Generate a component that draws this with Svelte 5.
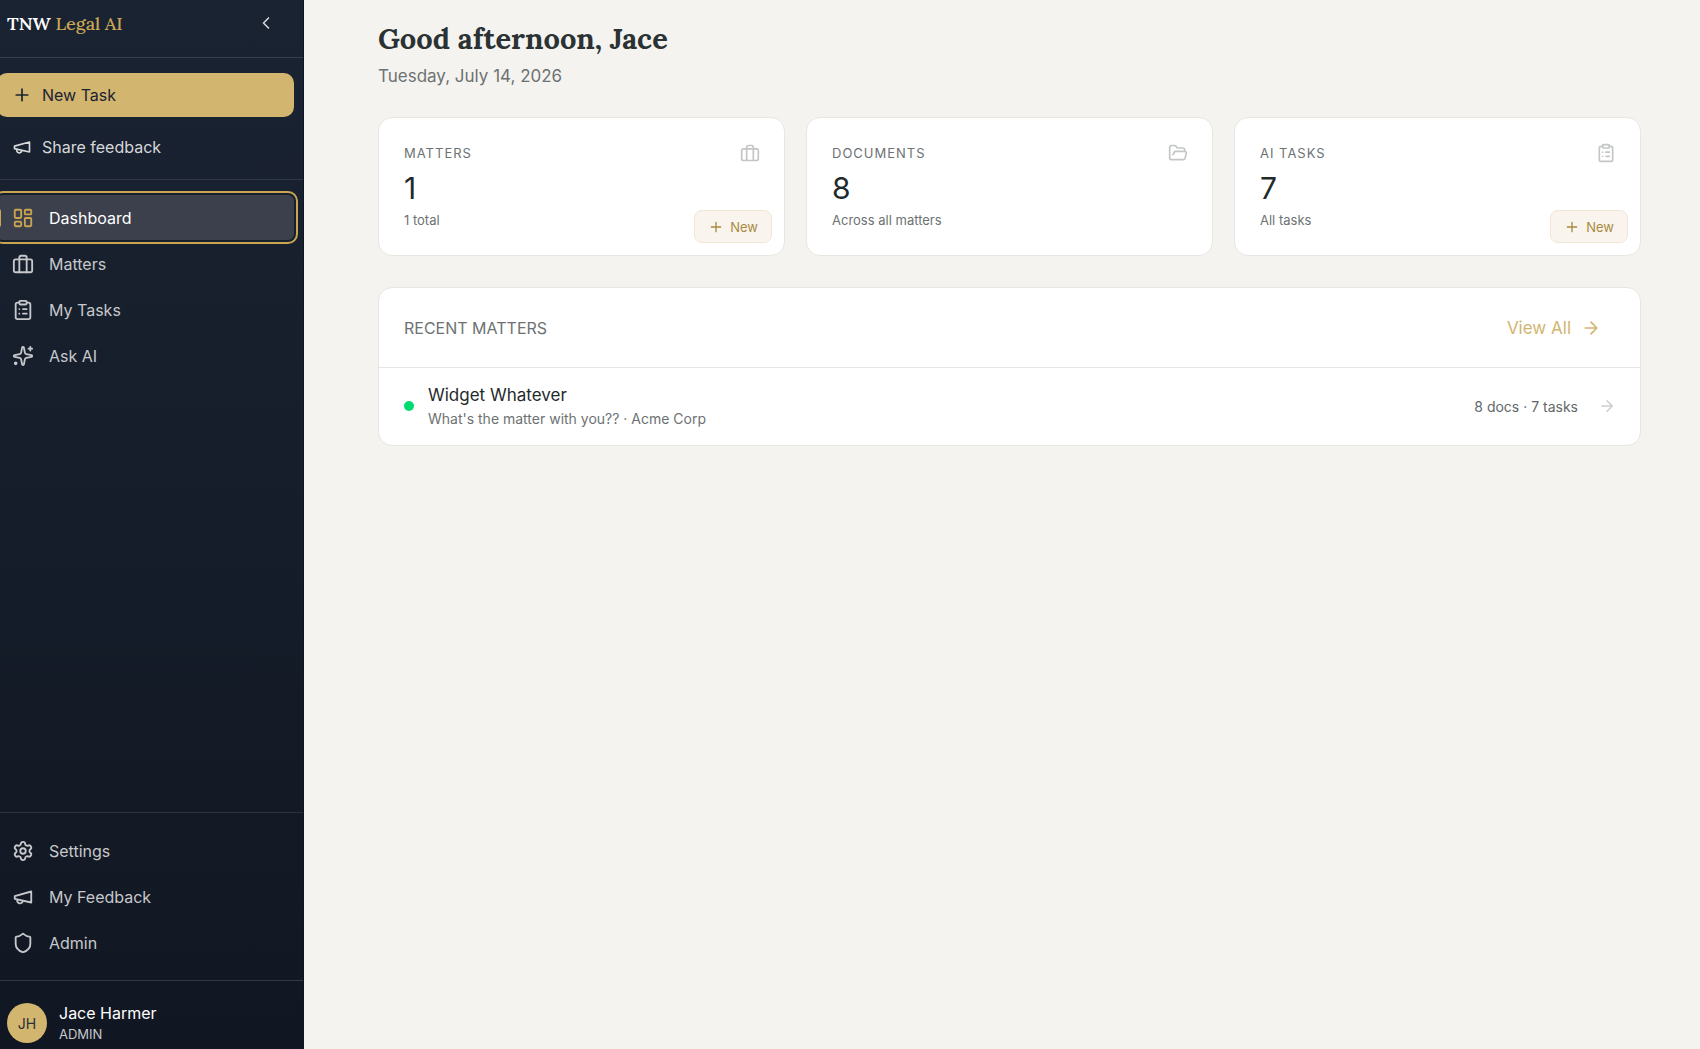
<script>
  const mainNav = [
    { label: 'Dashboard', icon: 'dashboard', active: true },
    { label: 'Matters', icon: 'briefcase' },
    { label: 'My Tasks', icon: 'clipboard' },
    { label: 'Ask AI', icon: 'sparkles' }
  ];

  const footerNav = [
    { label: 'Settings', icon: 'settings' },
    { label: 'My Feedback', icon: 'megaphone' },
    { label: 'Admin', icon: 'shield' }
  ];

  const stats = [
    { label: 'Matters', value: 1, note: '1 total', icon: 'briefcase', canAdd: true },
    { label: 'Documents', value: 8, note: 'Across all matters', icon: 'folder' },
    { label: 'AI Tasks', value: 7, note: 'All tasks', icon: 'clipboard', canAdd: true }
  ];

  const matters = [
    { name: 'Widget Whatever', description: "What's the matter with you??", client: 'Acme Corp', docs: 8, tasks: 7 }
  ];
</script>

{#snippet icon(name, size = 20, stroke = 2)}
  <svg
    width={size}
    height={size}
    viewBox="0 0 24 24"
    fill="none"
    stroke="currentColor"
    stroke-width={stroke}
    stroke-linecap="round"
    stroke-linejoin="round"
    aria-hidden="true"
  >
    {#if name === 'plus'}
      <path d="M5 12h14M12 5v14" />
    {:else if name === 'chevron'}
      <path d="m15 18-6-6 6-6" />
    {:else if name === 'arrow'}
      <path d="M5 12h14M12 5l7 7-7 7" />
    {:else if name === 'dashboard'}
      <rect width="7" height="9" x="3" y="3" rx="1" />
      <rect width="7" height="5" x="14" y="3" rx="1" />
      <rect width="7" height="9" x="14" y="12" rx="1" />
      <rect width="7" height="5" x="3" y="16" rx="1" />
    {:else if name === 'briefcase'}
      <rect width="20" height="14" x="2" y="7" rx="2" />
      <path d="M16 21V5a2 2 0 0 0-2-2h-4a2 2 0 0 0-2 2v16" />
    {:else if name === 'clipboard'}
      <rect width="8" height="4" x="8" y="2" rx="1" />
      <path d="M16 4h2a2 2 0 0 1 2 2v14a2 2 0 0 1-2 2H6a2 2 0 0 1-2-2V6a2 2 0 0 1 2-2h2" />
      <path d="M12 11h4M12 16h4M8 11h.01M8 16h.01" />
    {:else if name === 'sparkles'}
      <path d="M11.017 2.814a1 1 0 0 1 1.966 0l1.051 5.558a2 2 0 0 0 1.594 1.594l5.558 1.051a1 1 0 0 1 0 1.966l-5.558 1.051a2 2 0 0 0-1.594 1.594l-1.051 5.558a1 1 0 0 1-1.966 0l-1.051-5.558a2 2 0 0 0-1.594-1.594l-5.558-1.051a1 1 0 0 1 0-1.966l5.558-1.051a2 2 0 0 0 1.594-1.594z" />
      <path d="M20 2v4M22 4h-4" />
      <circle cx="4" cy="20" r="1" />
    {:else if name === 'settings'}
      <path d="M9.671 4.136a2.34 2.34 0 0 1 4.659 0 2.34 2.34 0 0 0 3.319 1.915 2.34 2.34 0 0 1 2.33 4.033 2.34 2.34 0 0 0 0 3.831 2.34 2.34 0 0 1-2.33 4.033 2.34 2.34 0 0 0-3.319 1.915 2.34 2.34 0 0 1-4.659 0 2.34 2.34 0 0 0-3.32-1.915 2.34 2.34 0 0 1-2.33-4.033 2.34 2.34 0 0 0 0-3.831A2.34 2.34 0 0 1 6.35 6.051a2.34 2.34 0 0 0 3.319-1.915" />
      <circle cx="12" cy="12" r="3" />
    {:else if name === 'megaphone'}
      <path d="m3 11 18-5v12L3 14v-3z" />
      <path d="M11.6 16.8a3 3 0 1 1-5.8-1.6" />
    {:else if name === 'shield'}
      <path d="M20 13c0 5-3.5 7.5-7.66 8.95a1 1 0 0 1-.67-.01C7.5 20.5 4 18 4 13V6a1 1 0 0 1 1-1c2 0 4.5-1.2 6.24-2.72a1.17 1.17 0 0 1 1.52 0C14.51 3.81 17 5 19 5a1 1 0 0 1 1 1z" />
    {:else if name === 'folder'}
      <path d="m6 14 1.5-2.9A2 2 0 0 1 9.24 10H20a2 2 0 0 1 1.94 2.5l-1.54 6a2 2 0 0 1-1.95 1.5H4a2 2 0 0 1-2-2V5a2 2 0 0 1 2-2h3.9a2 2 0 0 1 1.69.9l.81 1.2a2 2 0 0 0 1.67.9H18a2 2 0 0 1 2 2v2" />
    {/if}
  </svg>
{/snippet}

<div class="app">
  <aside class="sidebar">
    <div class="brand">
      <span class="brand-name">TNW <span>Legal AI</span></span>
      <button class="collapse" aria-label="Collapse sidebar">{@render icon('chevron')}</button>
    </div>

    <div class="quick-actions">
      <button class="new-task">{@render icon('plus')} New Task</button>
      <button class="share">{@render icon('megaphone')} Share feedback</button>
    </div>

    <nav class="nav" aria-label="Main">
      {#each mainNav as item}
        <a href="#{item.icon}" class="nav-item" class:active={item.active}>
          {@render icon(item.icon, 22)}
          {item.label}
        </a>
      {/each}
    </nav>

    <nav class="nav nav-footer" aria-label="Account">
      {#each footerNav as item}
        <a href="#{item.icon}" class="nav-item">
          {@render icon(item.icon, 22)}
          {item.label}
        </a>
      {/each}
    </nav>

    <div class="user">
      <div class="avatar">JH</div>
      <div class="user-info">
        <div class="user-name">Jace Harmer</div>
        <div class="user-role">ADMIN</div>
      </div>
    </div>
  </aside>

  <main class="main">
    <h1>Good afternoon, Jace</h1>
    <p class="date">Tuesday, July 14, 2026</p>

    <div class="stats">
      {#each stats as stat}
        <section class="card stat">
          <div class="stat-head">
            <h2>{stat.label}</h2>
            {@render icon(stat.icon)}
          </div>
          <div class="stat-value">{stat.value}</div>
          <div class="stat-note">{stat.note}</div>
          {#if stat.canAdd}
            <button class="add">{@render icon('plus', 16)} New</button>
          {/if}
        </section>
      {/each}
    </div>

    <section class="card recent">
      <div class="recent-head">
        <h2>Recent Matters</h2>
        <a href="#matters" class="view-all">View All {@render icon('arrow')}</a>
      </div>
      {#each matters as matter}
        <a href="#matter" class="matter">
          <span class="dot"></span>
          <span class="matter-info">
            <span class="matter-name">{matter.name}</span>
            <span class="matter-description">{matter.description} · {matter.client}</span>
          </span>
          <span class="matter-counts">{matter.docs} docs · {matter.tasks} tasks</span>
          {@render icon('arrow', 18)}
        </a>
      {/each}
    </section>
  </main>
</div>

<style>
  :global(body) {
    margin: 0;
    background: #f5f3ef;
  }

  .app {
    display: flex;
    min-height: 100vh;
    font-family: Inter, 'Liberation Sans', sans-serif;
    font-size: 16px;
    color: #2a3234;
  }

  .app :global(svg) {
    flex: none;
  }

  a {
    color: inherit;
    text-decoration: none;
  }

  button {
    font: inherit;
    cursor: pointer;
  }

  h1,
  h2,
  p {
    margin: 0;
    font-weight: 400;
  }

  .sidebar {
    display: flex;
    flex-direction: column;
    box-sizing: border-box;
    flex: none;
    width: 304px;
    overflow: hidden;
    background: linear-gradient(180deg, #1a2332 0%, #111722 100%);
    border-right: 1px solid #0e1523;
    color: #c6c8cb;
  }

  .brand {
    display: flex;
    align-items: center;
    justify-content: space-between;
    height: 46px;
    padding: 0 27px 11px 7px;
    border-bottom: 1px solid #363e4b;
  }

  .brand-name {
    font-family: Lora, 'Liberation Serif', serif;
    font-size: 18px;
    font-weight: 600;
    color: #fff;
  }

  .brand-name span {
    font-weight: 500;
    color: #c9a755;
  }

  .collapse {
    display: flex;
    padding: 0;
    border: none;
    background: none;
    color: #d3d5d8;
  }

  .quick-actions {
    display: flex;
    flex-direction: column;
    gap: 8px;
    padding: 15px 9px 10px 0;
    border-bottom: 1px solid #313946;
  }

  .new-task,
  .share {
    display: flex;
    align-items: center;
    gap: 10px;
    height: 44px;
    margin-left: -3px;
    padding: 0 15px;
    border: none;
    border-radius: 10px;
    background: none;
    color: #d6d8da;
  }

  .new-task {
    background: #d2b56e;
    color: #1a2332;
  }

  .nav {
    display: flex;
    flex-direction: column;
    gap: 1px;
    padding: 15px 9px 15px 0;
  }

  .nav-item {
    position: relative;
    display: flex;
    align-items: center;
    gap: 15px;
    height: 45px;
    margin-left: -3px;
    padding: 0 15px;
    border-radius: 6px;
  }

  .nav-item.active {
    background: #3c404c;
    color: #fff;
    outline: 2px solid #c9a550;
    outline-offset: 2px;
  }

  .nav-item.active::before {
    content: '';
    position: absolute;
    left: 0;
    width: 4px;
    height: 18px;
    border-radius: 0 2px 2px 0;
    background: #c9a550;
  }

  .nav-item.active :global(svg) {
    color: #c9a550;
  }

  .nav-footer {
    margin-top: auto;
    border-top: 1px solid #2c333e;
  }

  .user {
    display: flex;
    align-items: center;
    gap: 12px;
    padding: 21px 7px 5px;
    border-top: 1px solid #343a43;
  }

  .avatar {
    display: flex;
    align-items: center;
    justify-content: center;
    width: 40px;
    height: 40px;
    border-radius: 50%;
    background: #d2b56e;
    color: #2a3138;
    font-size: 14px;
  }

  .user-name {
    line-height: 22px;
    color: #fff;
  }

  .user-role {
    font-size: 13px;
    line-height: 20px;
  }

  .main {
    flex: 1;
    min-width: 0;
    padding: 18px 59px 40px 74px;
  }

  h1 {
    font-family: Lora, 'Liberation Serif', serif;
    font-size: 29px;
    font-weight: 700;
    line-height: 42px;
  }

  .date {
    margin-top: 2px;
    font-size: 17px;
    line-height: 28px;
    color: #6d7273;
  }

  .card {
    box-sizing: border-box;
    border: 1px solid #e8e6e1;
    border-radius: 14px;
    background: #fff;
  }

  .stats {
    display: grid;
    grid-template-columns: repeat(3, 1fr);
    gap: 21px;
    margin-top: 27px;
  }

  .stat {
    position: relative;
    padding: 25px 24px 25px 25px;
  }

  .stat-head {
    display: flex;
    align-items: center;
    justify-content: space-between;
    height: 20px;
    color: #c3c5c6;
  }

  .stat-head h2 {
    font-size: 13px;
    letter-spacing: 1px;
    text-transform: uppercase;
    color: #6d7273;
  }

  .stat-value {
    margin-top: 7px;
    font-size: 30px;
    line-height: 36px;
    color: #1f2a2c;
  }

  .stat-note {
    margin-top: 4px;
    font-size: 13px;
    line-height: 20px;
    color: #6d7273;
  }

  .add {
    position: absolute;
    right: 12px;
    bottom: 12px;
    display: flex;
    align-items: center;
    gap: 6px;
    height: 33px;
    padding: 0 13px;
    border: 1px solid #f1e6d3;
    border-radius: 8px;
    background: #f9f5ee;
    color: #a98a3f;
    font-size: 13px;
  }

  .recent {
    margin-top: 31px;
  }

  .recent-head {
    display: flex;
    align-items: center;
    justify-content: space-between;
    height: 79px;
    padding: 0 39px 0 25px;
    border-bottom: 1px solid #e8e6e1;
  }

  .recent-head h2 {
    font-size: 16px;
    text-transform: uppercase;
    color: #6d7273;
  }

  .view-all {
    display: flex;
    align-items: center;
    gap: 10px;
    font-size: 17px;
    color: #d2b56e;
  }

  .matter {
    display: flex;
    align-items: center;
    padding: 15px 24px 16px 25px;
    color: #cdcfcf;
  }

  .dot {
    width: 10px;
    height: 10px;
    margin-right: 14px;
    border-radius: 50%;
    background: #00dc72;
  }

  .matter-info {
    display: flex;
    flex: 1;
    flex-direction: column;
  }

  .matter-name {
    font-size: 17px;
    line-height: 25px;
    color: #1f2a2c;
  }

  .matter-description {
    font-size: 14px;
    line-height: 21px;
    color: #6d7273;
  }

  .matter-counts {
    margin-right: 20px;
    font-size: 14px;
    color: #626869;
  }
</style>
